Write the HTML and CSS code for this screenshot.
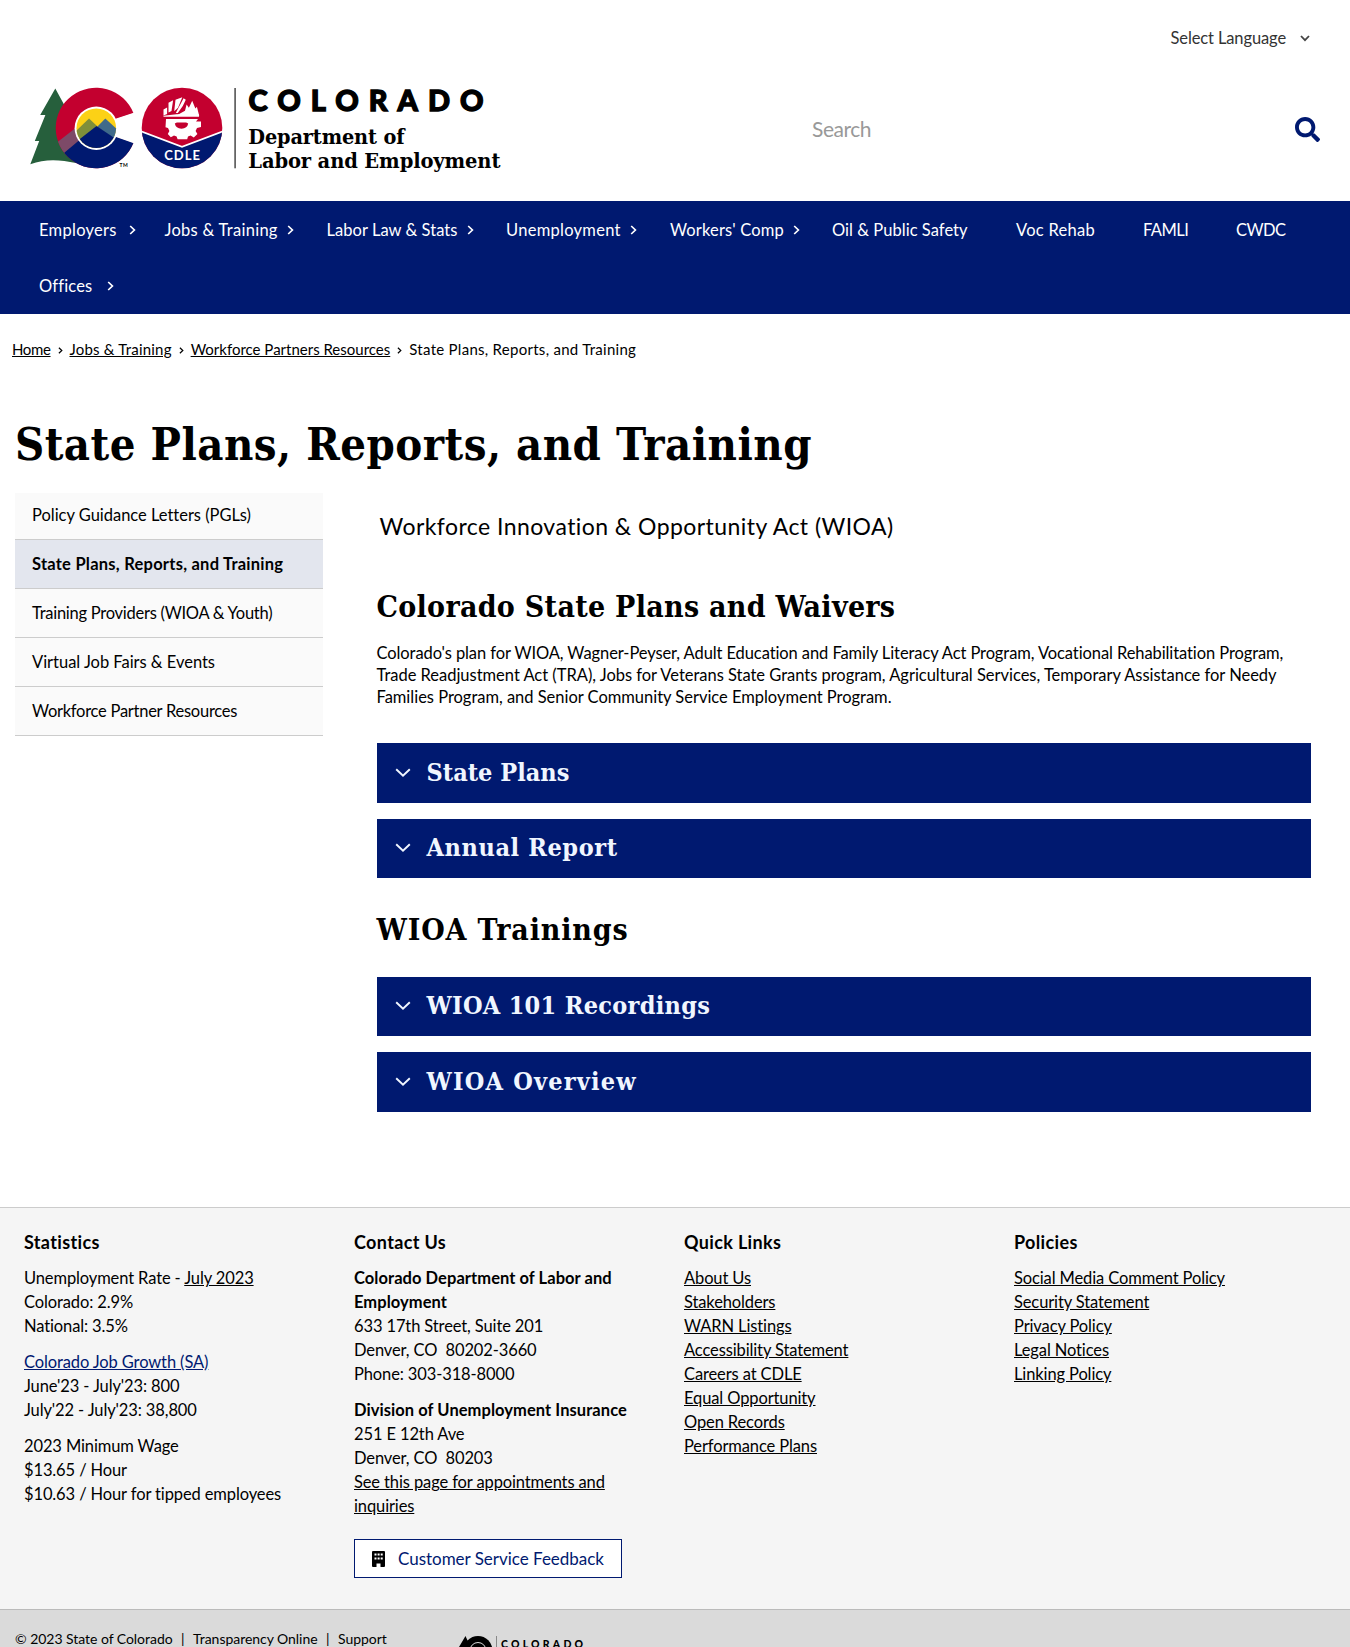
FILE: index.html
```
<!DOCTYPE html>
<html lang="en">
<head>
<meta charset="utf-8">
<title>State Plans, Reports, and Training | Department of Labor &amp; Employment</title>
<link rel="stylesheet" href="styles.css">
</head>
<body>
<svg class="defs" width="0" height="0" aria-hidden="true">
  <symbol id="right" viewBox="0 0 7 10"><path d="M1.2 1 5.4 5 1.2 9" fill="none" stroke="currentColor" stroke-width="1.7"/></symbol>
  <symbol id="down" viewBox="0 0 16 10"><path d="M1.2 1.2 8 7.8l6.8-6.6" fill="none" stroke="currentColor" stroke-width="1.9"/></symbol>
</svg>

<header class="header">
  <div class="language">
    <span>Select Language</span>
    <svg width="10" height="7" viewBox="0 0 10 7"><path d="M1 1l4 4.200L9 1" fill="none" stroke="#444" stroke-width="1.8"/></svg>
  </div>
  <div class="brand">
    <svg class="logo" width="500" height="100" viewBox="20 80 500 100" role="img" aria-label="Colorado Department of Labor and Employment">
      <defs>
        <clipPath id="big"><path d="M133.5 113.2A40.3 40.3 0 1 0 133.5 142.8L115.5 136.5 115.5 119.3Z"/></clipPath>
        <clipPath id="small"><circle cx="96.3" cy="128.2" r="19.8"/></clipPath>
        <clipPath id="seal"><circle cx="182" cy="128" r="40.3"/></clipPath>
      </defs>
      <path fill="#265f3c" d="M55.300 88.500 40.200 115h5.200L34.800 141h4.400L30.300 164.300C45 158.500 60 159.500 76 163L80 120 67 110Z"/>
      <g clip-path="url(#big)">
        <rect x="55" y="86" width="82" height="84" fill="#c3002f"/>
        <path fill="#7d4a68" d="M50 148 96 112v20L60 158Z"/>
        <path fill="#001970" d="M58 158 96.300 126 140 126V172H58Z"/>
      </g>
      <path fill="#fff" d="M114 119.300 134.500 112.400V143.400L114 136.200Z"/>
      <circle cx="96.3" cy="128.2" r="21.7" fill="#fff"/>
      <g clip-path="url(#small)">
        <rect x="75" y="106" width="44" height="44" fill="#fcd116"/>
        <path fill="#7f8f3a" d="M74 133 89 118.600 97 126 80 142Z"/>
        <path fill="#3f6a8a" d="M97 127 105.300 118.600 119 131V142Z"/>
        <path fill="#001970" d="M76 142 96.500 126 119 141V152H76Z"/>
      </g>
      <text class="logo-tm" x="119.500" y="167" textLength="8">TM</text>
      <g clip-path="url(#seal)">
        <rect x="141" y="87" width="82" height="82" fill="#c3002f"/>
        <path fill="#001970" d="M141 131.500 182 147 223 131.500V170H141Z"/>
        <path fill="none" stroke="#fff" stroke-width="1.8" d="M141 131.300 182 146.900 223 131.300"/>
      </g>
      <g fill="#fff">
        <path d="M163.500 109.500l3.600-2v6.500l-3.600 1.600ZM168.500 102.800l4.600-2.600-1.600 10.800-3 1.600ZM175.500 99.800l6.800-2.600-4.300 10.600-3.800 3.400ZM183.600 98.200l2.200 1.600-3 6.200-5 7h-2Z"/>
        <path d="M176 115.800l9-5 1.600-6.300 2.300 3.300 3.300-7 3.200 7.600 1.500-1.600 2.300 9Z"/>
        <path d="M163.500 115.800l13-1.500h22.500v2.500H163.500Z"/>
        <path d="M166 119h32l-2 2.500h5v5.500l-4 1-1.400 3 1.800 3-3.600 3.400-3.200-1.800-2.600 1-.8 2.600h-9.600l-1-2.600-2.600-1-3.200 1.600-3-3.200 1.600-3-1.400-3-2.500-.8Z"/>
      </g>
      <path fill="#c3002f" d="M174.800 123.500a6.800 6.200 0 0 0 13.400 0l-2-1h-9.400Z"/>
      <text class="logo-seal" x="164.300" y="159.800" textLength="35.5">CDLE</text>
      <rect x="234.300" y="88" width="1.6" height="80.3" fill="#555"/>
      <text class="logo-state" x="248.500" y="110.500" textLength="235">COLORADO</text>
      <text class="logo-dept" x="248.300" y="144.300" textLength="156" lengthAdjust="spacingAndGlyphs">Department of</text>
      <text class="logo-dept" x="248.300" y="168" textLength="252" lengthAdjust="spacingAndGlyphs">Labor and Employment</text>
    </svg>
    <div class="search">
      <span>Search</span>
      <svg width="25" height="25" viewBox="0 0 512 512" fill="#001970"><path d="M505 442.700 405.300 343c-4.500-4.500-10.600-7-17-7H372c27.600-35.300 44-79.700 44-128C416 93.100 322.900 0 208 0S0 93.100 0 208s93.100 208 208 208c48.300 0 92.700-16.400 128-44v16.300c0 6.400 2.500 12.500 7 17l99.700 99.700c9.400 9.400 24.600 9.400 33.900 0l28.300-28.300c9.400-9.400 9.400-24.600.1-34zM208 336c-70.700 0-128-57.200-128-128 0-70.700 57.200-128 128-128 70.700 0 128 57.200 128 128 0 70.700-57.200 128-128 128z"/></svg>
    </div>
  </div>
</header>

<nav class="nav">
  <a class="nav-item">Employers <svg class="chev"><use href="#right"/></svg></a>
  <a class="nav-item">Jobs &amp; Training <svg class="chev"><use href="#right"/></svg></a>
  <a class="nav-item tight">Labor Law &amp; Stats <svg class="chev"><use href="#right"/></svg></a>
  <a class="nav-item">Unemployment <svg class="chev"><use href="#right"/></svg></a>
  <a class="nav-item mid">Workers' Comp <svg class="chev"><use href="#right"/></svg></a>
  <a class="nav-item tight">Oil &amp; Public Safety</a>
  <a class="nav-item">Voc Rehab</a>
  <a class="nav-item caps">FAMLI</a>
  <a class="nav-item caps">CWDC</a>
  <a class="nav-item far">Offices <svg class="chev"><use href="#right"/></svg></a>
</nav>

<div class="breadcrumb">
  <a class="crumb-home">Home</a><svg class="sep"><use href="#right"/></svg><a class="crumb-jobs">Jobs &amp; Training</a><svg class="sep"><use href="#right"/></svg><a>Workforce Partners Resources</a><svg class="sep"><use href="#right"/></svg><span class="crumb-page">State Plans, Reports, and Training</span>
</div>

<h1 class="title">State Plans, Reports, and Training</h1>

<div class="columns">
  <ul class="side">
    <li class="loose">Policy Guidance Letters (PGLs)</li>
    <li class="current">State Plans, Reports, and Training</li>
    <li>Training Providers (WIOA &amp; Youth)</li>
    <li class="loose">Virtual Job Fairs &amp; Events</li>
    <li>Workforce Partner Resources</li>
  </ul>
  <main class="main">
    <p class="intro">Workforce Innovation &amp; Opportunity Act (WIOA)</p>
    <h2 class="plans">Colorado State Plans and Waivers</h2>
    <p class="text">Colorado's plan for WIOA, Wagner-Peyser, Adult Education and Family Literacy Act Program, Vocational Rehabilitation Program,<br><span class="loose">Trade Readjustment Act (TRA), Jobs for Veterans State Grants program, Agricultural Services, Temporary Assistance for Needy<br>Families Program, and Senior Community Service Employment Program.</span></p>
    <div class="accordion">
      <div class="panel"><svg width="16" height="10"><use href="#down"/></svg><span>State Plans</span></div>
      <div class="panel"><svg width="16" height="10"><use href="#down"/></svg><span class="wide">Annual Report</span></div>
    </div>
    <h2 class="trainings">WIOA Trainings</h2>
    <div class="accordion">
      <div class="panel"><svg width="16" height="10"><use href="#down"/></svg><span class="medium">WIOA 101 Recordings</span></div>
      <div class="panel"><svg width="16" height="10"><use href="#down"/></svg><span class="widest">WIOA Overview</span></div>
    </div>
  </main>
</div>

<footer class="footer">
  <section>
    <h3>Statistics</h3>
    <p>Unemployment Rate - <a>July 2023</a><br>Colorado: 2.9%<br>National: 3.5%</p>
    <p><a class="blue">Colorado Job Growth (SA)</a><br>June'23 - July'23: 800<br>July'22 - July'23: 38,800</p>
    <p>2023 Minimum Wage<br>$13.65 / Hour<br>$10.63 / Hour for tipped employees</p>
  </section>
  <section>
    <h3>Contact Us</h3>
    <p><b>Colorado Department of Labor and<br>Employment</b><br>633 17th Street, Suite 201<br>Denver, CO&nbsp; 80202-3660<br>Phone: 303-318-8000</p>
    <p><b>Division of Unemployment Insurance</b><br>251 E 12th Ave<br>Denver, CO&nbsp; 80203<br><a>See this page for appointments and<br>inquiries</a></p>
    <a class="feedback">
      <svg width="13" height="16" viewBox="0 0 13 16"><path fill="#000" fill-rule="evenodd" d="M1 0h11a1 1 0 0 1 1 1v14a1 1 0 0 1-1 1H8.500v-3.500h-4V16H1a1 1 0 0 1-1-1V1a1 1 0 0 1 1-1ZM2.500 2.500v2h2v-2ZM5.600 2.500v2h2v-2ZM8.700 2.500v2h2v-2ZM2.500 6.500v2h2v-2ZM5.600 6.500v2h2v-2ZM8.700 6.500v2h2v-2Z"/></svg>
      <span>Customer Service Feedback</span>
    </a>
  </section>
  <section>
    <h3>Quick Links</h3>
    <p><a>About Us</a><br><a>Stakeholders</a><br><a>WARN Listings</a><br><a>Accessibility Statement</a><br><a>Careers at CDLE</a><br><a>Equal Opportunity</a><br><a>Open Records</a><br><a>Performance Plans</a></p>
  </section>
  <section>
    <h3>Policies</h3>
    <p><a>Social Media Comment Policy</a><br><a>Security Statement</a><br><a>Privacy Policy</a><br><a>Legal Notices</a><br><a>Linking Policy</a></p>
  </section>
</footer>

<div class="bottom">
  <div class="legal"><span>© 2023 State of Colorado</span><span>|</span><span>Transparency Online</span><span>|</span><span>Support</span></div>
  <svg width="130" height="44" viewBox="456 1634 130 44">
    <path d="M465.500 1636 459 1647h2.500L457 1660h12l1-14Z"/>
    <circle cx="478" cy="1650.5" r="14.5"/>
    <circle cx="478" cy="1650.5" r="8" fill="none" stroke="#dadada" stroke-width="1"/>
    <rect x="496" y="1636" width="1" height="30" fill="#888"/>
    <text class="mini-state" x="501" y="1647.5" textLength="82">COLORADO</text>
  </svg>
</div>
</body>
</html>
```
FILE: styles.css
```
* { box-sizing: border-box; }
body {
  margin: 0;
  height: 1647px;
  overflow: hidden;
  background: #fff;
  color: #000;
  font: 16.5px/24px Lato, "Liberation Sans", sans-serif;
  letter-spacing: -.12px;
  white-space: nowrap;
}
h1, h2, h3, p, ul { margin: 0; padding: 0; }
svg { display: block; flex: none; }
.defs { position: absolute; }

.header { height: 201px; }
.language {
  display: flex;
  justify-content: flex-end;
  align-items: center;
  gap: 14px;
  height: 76px;
  padding-right: 40px;
  color: #333;
}
.brand {
  display: flex;
  align-items: center;
  justify-content: space-between;
  height: 108px;
  padding: 0 30px 0 20px;
}
.search {
  display: flex;
  align-items: center;
  justify-content: space-between;
  width: 508px;
  padding-bottom: 2px;
  color: #999;
  font-size: 21px;
  letter-spacing: -.45px;
}
.logo-tm { font: 700 5px Lato, sans-serif; }
.logo-seal { font: 700 13px Lato, sans-serif; fill: #fff; }
.logo-state { font: 900 29px Lato, sans-serif; stroke: #000; stroke-width: 1.3px; }
.logo-dept { font: 700 20.5px "DejaVu Serif Condensed", "DejaVu Serif", serif; }

.nav {
  display: grid;
  grid-template-columns: 125.5px 162px 179.5px 164px 162px 184px 127px 93px 75px;
  grid-auto-rows: 56px;
  height: 113px;
  padding: 1px 0 0 39px;
  background: #001970;
  color: #fff;
  font-size: 16.5px;
  letter-spacing: .28px;
}
.nav-item { display: flex; align-items: center; gap: 9.5px; }
.nav-item:first-child { gap: 12.5px; }
.nav-item.far { gap: 15px; letter-spacing: .16px; }
.nav-item.tight { letter-spacing: .04px; }
.nav-item.mid { letter-spacing: .16px; }
.nav-item.caps { letter-spacing: -.55px; }
.chev { width: 7px; height: 10px; }

.breadcrumb {
  display: flex;
  align-items: center;
  height: 20px;
  margin-top: 25px;
  padding-left: 12px;
  font-size: 15px;
  letter-spacing: 0;
}
.breadcrumb a { text-decoration: underline; }
.breadcrumb .crumb-home { letter-spacing: -.37px; }
.breadcrumb .crumb-jobs { letter-spacing: .2px; }
.breadcrumb .crumb-page { letter-spacing: .28px; }
.sep { width: 5px; height: 7px; margin: 2px 7px 0; }
.loose { letter-spacing: -.02px; }

.title, .main h2, .panel {
  font-family: "DejaVu Serif Condensed", "DejaVu Serif", serif;
  font-weight: 700;
}
.title {
  margin: 59px 0 19px 15px;
  font-size: 45px;
  line-height: 54px;
  letter-spacing: .46px;
}

.columns { display: flex; gap: 54px; height: 715.5px; padding-left: 15px; }
.side { width: 307.5px; padding-top: 2px; list-style: none; letter-spacing: -.26px; }
.side li {
  height: 49px;
  padding-left: 17px;
  border-bottom: 1px solid #ccc;
  background: #fafafa;
  line-height: 48px;
}
.side li:first-child { height: 47px; line-height: 44px; }
.side .current {
  background: #e3e6ee;
  font-weight: 700;
  letter-spacing: .24px;
}
.main { width: 934.5px; }
.intro {
  padding: 20px 0 0 3px;
  font-size: 23px;
  line-height: 30px;
  letter-spacing: .44px;
}
.main h2 { font-size: 30px; line-height: 36px; }
.main .plans { margin-top: 47.5px; letter-spacing: .29px; }
.main .trainings { margin-top: 33.5px; letter-spacing: .84px; }
.text { margin-top: 17.5px; line-height: 22px; letter-spacing: -.09px; }
.accordion { display: grid; gap: 16px; margin-top: 29px; }
.text + .accordion { margin-top: 35px; }
.panel {
  display: flex;
  align-items: center;
  gap: 16px;
  height: 59.5px;
  padding-left: 18px;
  background: #001970;
  color: #f0f6ff;
  font-size: 25px;
  letter-spacing: 0;
}
.medium { letter-spacing: .3px; }
.wide { letter-spacing: .6px; }
.widest { letter-spacing: 1.2px; }

.footer {
  display: grid;
  grid-template-columns: repeat(4, 330px);
  height: 402.5px;
  padding: 22px 0 0 24px;
  border-top: 1px solid #ccc;
  background: #f5f5f5;
}
.footer h3 {
  margin-bottom: 12.5px;
  font-size: 18px;
  line-height: 24px;
  letter-spacing: .35px;
}
.footer p { margin-bottom: 12px; }
.footer a { text-decoration: underline; }
.footer b { letter-spacing: .06px; }
.footer .blue { color: #001970; }
.footer .feedback {
  display: flex;
  align-items: center;
  gap: 13px;
  width: 268px;
  height: 39px;
  margin-top: 21px;
  padding-left: 17px;
  border: 1px solid #001970;
  background: #fff;
  color: #001970;
  font-size: 17px;
  letter-spacing: -.02px;
  text-decoration: none;
}

.bottom {
  display: flex;
  height: 60px;
  border-top: 1px solid #bbb;
  background: #dadada;
}
.legal {
  display: flex;
  gap: 8.5px;
  width: 456px;
  padding: 17px 0 0 15px;
  font-size: 14px;
  line-height: 24px;
  letter-spacing: -.04px;
}
.bottom svg { margin-top: 24px; }
.mini-state { font: 900 10.5px Lato, sans-serif; }
```
